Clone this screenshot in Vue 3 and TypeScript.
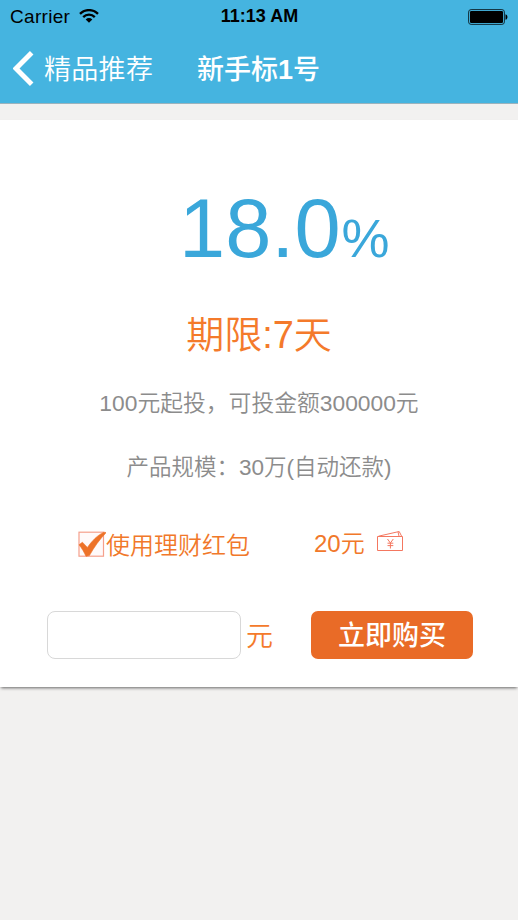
<script setup lang="ts">
import { ref } from 'vue'

const rate = ref('18.0')
const days = ref(7)
const minimum = ref(100)
const available = ref(300000)
const bonus = ref(20)
const useBonus = ref(true)
const amount = ref('')
</script>

<template>
  <main class="screen">
    <header class="header">
      <div class="status">
        <div class="carrier">
          <span>Carrier</span>
          <svg class="wifi" width="20" height="14" viewBox="0 0 20 14">
            <path d="M1 4.9C6-.2 14-.2 19 4.9M4.2 8.1c3.2-3.2 8.4-3.2 11.6 0" fill="none" stroke="#000" stroke-width="2.3" />
            <path d="M6.7 10.4c1.9-1.8 4.7-1.8 6.6 0L10 13.7z" />
          </svg>
        </div>
        <strong class="clock">11:13 AM</strong>
        <svg class="battery" width="41" height="16" viewBox="0 0 41 16">
          <rect x=".6" y=".6" width="35.8" height="14.8" rx="2.5" fill="none" stroke="#102b36" stroke-width="1" />
          <rect x="2" y="2" width="33" height="12" rx="1.2" />
          <path d="M37.5 5.2c2.6.6 2.6 5 0 5.6z" />
        </svg>
      </div>
      <nav class="nav">
        <button class="back">
          <svg width="21" height="35" viewBox="0 0 21 35">
            <path d="M18.7 1.8 3 17.5l15.7 15.7" fill="none" stroke="#fff" stroke-width="5" />
          </svg>
          <span class="label">精品推荐</span>
        </button>
        <h1 class="title">新手标<b>1</b>号</h1>
      </nav>
    </header>

    <section class="card">
      <div class="rate"><span class="number">{{ rate }}</span><span class="percent">%</span></div>
      <p class="term">期限:<span class="days">{{ days }}</span>天</p>
      <p class="info limits">{{ minimum }}元起投，可投金额{{ available }}元</p>
      <p class="info scale">产品规模：30万(自动还款)</p>
      <div class="bonus">
        <button class="option" @click="useBonus = !useBonus">
          <svg width="28" height="28" viewBox="0 0 28 28">
            <rect x="1" y="2.2" width="24.5" height="24" fill="#fffafa" stroke="#f5a08c" stroke-width="1.2" />
            <path v-if="useBonus" d="M1 14.8 4.4 12.2 9.4 17.4C13.8 11.2 19.4 5 26 2.2L28.2 2.6C21.8 9.2 16 17.2 11.4 25.6L8 26.3C6 22.2 4 18.3 1 14.8z" fill="#ed7228" stroke="#ed7228" stroke-width=".6" />
          </svg>
          <span class="caption">使用理财红包</span>
        </button>
        <span class="value">{{ bonus }}元</span>
        <svg class="ticket" width="28" height="23" viewBox="0 0 28 23">
          <g fill="none" stroke="#f47760" stroke-width="1">
            <path d="M1.5 6.5h25v14h-25zM2.5 6.2 23.2 1.5 25.5 6M22 1.9l1 4.2" />
            <path d="m11.5 9 2.9 4 2.9-4M14.4 13v5.5M11.5 13.2h5.8M11.5 15.6h5.8" />
          </g>
        </svg>
      </div>
      <form class="purchase" @submit.prevent>
        <input v-model="amount" class="amount" inputmode="numeric" aria-label="金额" />
        <span class="unit">元</span>
        <button class="buy">立即购买</button>
      </form>
    </section>
  </main>
</template>

<style>
body {
  background: #f2f1f0;
}
</style>

<style scoped>
* {
  box-sizing: border-box;
}
.screen {
  min-height: 920px;
  overflow: hidden;
  background: #f2f1f0;
  font-family: "Liberation Sans", "Noto Sans CJK SC", sans-serif;
  font-weight: 350;
  white-space: nowrap;
}
button {
  margin: 0;
  padding: 0;
  border: 0;
  background: none;
  color: inherit;
  font: inherit;
}
.header {
  height: 104px;
  background: #45b4e0;
  border-bottom: 1px solid #9bb3bd;
}
.status {
  display: grid;
  grid-template-columns: 1fr auto 1fr;
  align-items: center;
  height: 33px;
  padding: 0 9px 0 10px;
  color: #000;
}
.carrier {
  display: flex;
  align-items: center;
  gap: 9px;
  font-size: 19px;
  font-weight: 400;
  letter-spacing: 0.3px;
}
.wifi {
  margin-top: -1px;
}
.clock {
  font-size: 18px;
  font-weight: 700;
}
.battery {
  justify-self: end;
}
.nav {
  display: flex;
  align-items: center;
  height: 70px;
  padding-left: 13px;
  color: #fff;
  font-size: 27px;
}
.back {
  display: flex;
  align-items: center;
  width: 184px;
  gap: 10px;
}
.label {
  padding-bottom: 2px;
  letter-spacing: 0.3px;
}
.title {
  margin: 0;
  padding-bottom: 2px;
  font-size: 27px;
  font-weight: 500;
}
.title b {
  font-weight: 700;
}
.card {
  height: 567px;
  margin-top: 16px;
  background: #fff;
  box-shadow: 0 2px 3px -1px #666;
}
.rate {
  display: flex;
  align-items: baseline;
  height: 188px;
  padding: 61px 0 0 179px;
  color: #3aa7da;
  line-height: 96px;
}
.number {
  font-size: 83px;
}
.percent {
  margin-left: 1px;
  font-size: 54px;
}
.term {
  height: 54px;
  margin: 0;
  color: #f47a2b;
  font-size: 38px;
  line-height: 54px;
  text-align: center;
}
.info {
  height: 32px;
  margin: 0;
  color: #8c8c8c;
  font-size: 22.8px;
  line-height: 32px;
  text-align: center;
}
.limits {
  margin-top: 25px;
}
.scale {
  margin-top: 33px;
  font-size: 22.5px;
}
.bonus {
  display: flex;
  align-items: center;
  height: 40px;
  margin-top: 40px;
  padding-left: 78px;
  color: #f1782a;
  font-size: 24px;
}
.option {
  display: flex;
  align-items: center;
  width: 236px;
}
.caption {
  padding-bottom: 2px;
}
.value {
  padding-bottom: 5px;
}
.ticket {
  margin: 0 0 5px 11px;
}
.purchase {
  display: flex;
  align-items: center;
  margin-top: 47px;
  padding-left: 47px;
}
.amount {
  width: 194px;
  height: 48px;
  padding: 0 12px;
  border: 1px solid #d8d8d8;
  border-radius: 8px;
  outline: 0;
  background: #fff;
  font-size: 24px;
}
.unit {
  width: 65px;
  margin-left: 5px;
  padding-bottom: 2px;
  color: #f47a2b;
  font-size: 27px;
}
.buy {
  width: 162px;
  height: 48px;
  padding-bottom: 4px;
  border-radius: 7px;
  background: #e96b27;
  color: #fff;
  font-size: 27px;
  font-weight: 500;
}
</style>
